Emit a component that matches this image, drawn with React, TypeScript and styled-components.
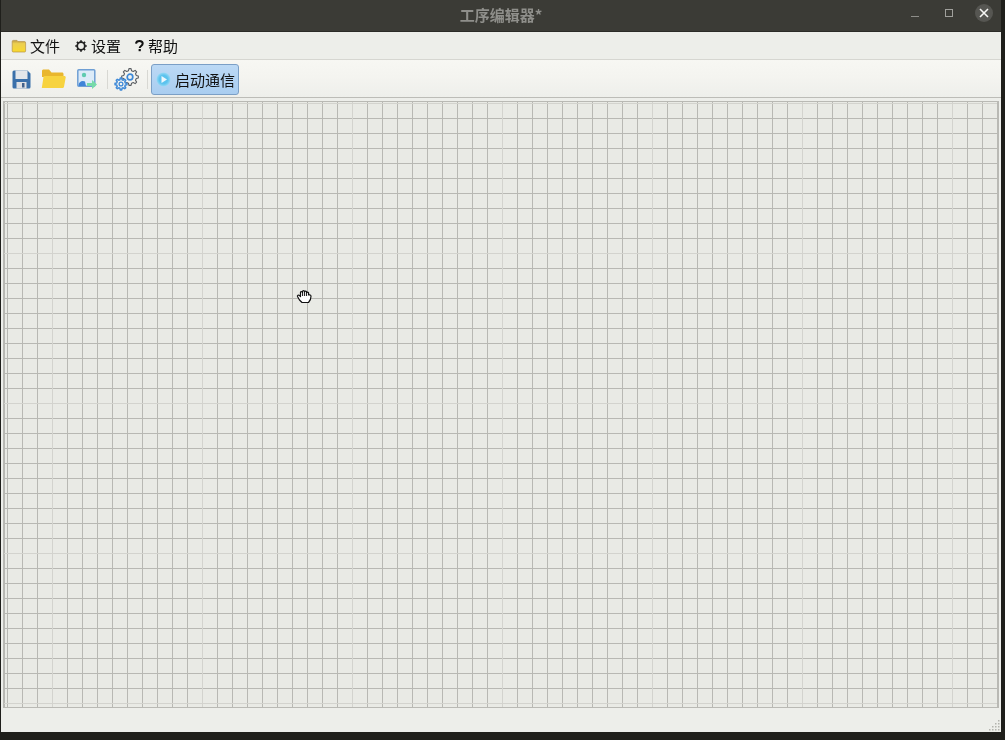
import React from "react";
import styled, { createGlobalStyle } from "styled-components";

const Global = createGlobalStyle`
  html, body { margin: 0; padding: 0; width: 1005px; height: 740px; overflow: hidden; background: #1f1f1b; }
  #root { width: 1005px; height: 740px; }
`;

const Desktop = styled.div`
  width: 1005px;
  height: 740px;
  padding: 0 4px 8px 1px;
  box-sizing: border-box;
  background: #1f1f1b;
  font-family: "Liberation Sans", "Noto Sans CJK SC", sans-serif;
`;

const Win = styled.div`
  height: 732px;
  display: flex;
  flex-direction: column;
  background: #edeeea;
  position: relative;
`;

const TitleBar = styled.div`
  height: 32px;
  flex: none;
  background: #3b3b36;
  border-bottom: 1px solid #2b2b27;
  box-sizing: border-box;
  position: relative;
  display: flex;
  align-items: center;
  justify-content: center;
  padding-bottom: 3px;
`;

const Title = styled.div`
  font-size: 15px;
  font-weight: 700;
  color: #8f8f8b;
  font-family: "Noto Sans CJK SC", sans-serif;
  filter: blur(0.3px);
`;

const WinButtons = styled.div`
  position: absolute;
  right: 8px;
  top: 4px;
  display: flex;
  align-items: center;
  gap: 10px;
`;

const WinBtn = styled.div<{ $close?: boolean }>`
  width: 24px;
  height: 18px;
  display: flex;
  align-items: center;
  justify-content: center;
  ${(p) => p.$close && "width: 18px; height: 18px; border-radius: 50%; background: #565652; margin-left: 4px;"}
`;

const MenuBar = styled.div`
  height: 28px;
  flex: none;
  display: flex;
  align-items: center;
  padding-left: 10px;
  gap: 14px;
  background: #edeeea;
  border-bottom: 1px solid #d6d6d1;
  box-sizing: border-box;
`;

const MenuItem = styled.div`
  display: flex;
  align-items: center;
  gap: 3px;
  font-size: 15px;
  color: #111;
  font-family: "Noto Sans CJK SC", sans-serif;
  filter: blur(0.3px);
`;

const ToolBar = styled.div`
  height: 38px;
  flex: none;
  display: flex;
  align-items: center;
  padding: 1px 0 0 4px;
  box-sizing: border-box;
  background: linear-gradient(#f7f7f3, #f4f4f0 45%, #eeefeb);
  border-bottom: 1px solid #bcbcb7;
`;

const ToolIcon = styled.div<{ $w?: number }>`
  width: ${(p) => p.$w ?? 32}px;
  height: 28px;
  display: flex;
  align-items: center;
  justify-content: center;
  filter: blur(0.3px);
`;

const Sep = styled.div<{ $l: number; $r: number }>`
  width: 1px;
  height: 19px;
  background: #d8d8d3;
  margin: 0 ${(p) => p.$r}px 0 ${(p) => p.$l}px;
`;

const ActiveButton = styled.div`
  height: 31px;
  width: 88px;
  box-sizing: border-box;
  border: 1px solid #7b9fc6;
  border-radius: 3px;
  background: linear-gradient(#bcd9f5, #a9cdf0);
  display: flex;
  align-items: center;
  gap: 4px;
  padding-left: 4px;
  font-size: 15px;
  color: #111;
  font-family: "Noto Sans CJK SC", sans-serif;
`;

const ButtonLabel = styled.span`
  filter: blur(0.3px);
  padding-top: 1px;
`;

const Canvas = styled.div`
  height: 607px;
  flex: none;
  margin: 3px 2px 0 2px;
  box-sizing: border-box;
  border: 1px solid #b9b9b4;
  border-right-width: 2px;
  background-color: #e9eae5;
  background-image:
    repeating-linear-gradient(to right, #d3d3ce 0 1px, transparent 1px 150px),
    repeating-linear-gradient(to bottom, #d3d3ce 0 1px, transparent 1px 150px),
    repeating-linear-gradient(to right, #b8b8b3 0 1px, transparent 1px 15px),
    repeating-linear-gradient(to bottom, #b8b8b3 0 1px, transparent 1px 15px);
  background-position: 48px 0, 0 1px, 3px 0, 0 1px;
  position: relative;
`;

const Status = styled.div`
  flex: 1;
  position: relative;
`;

const Grip = styled.svg`
  position: absolute;
  right: 1px;
  bottom: 1px;
`;

const Cursor = styled.svg`
  position: absolute;
  left: 292px;
  top: 187px;
`;

const gearPath = (cx: number, cy: number, ro: number, ri: number, teeth: number) => {
  const step = (Math.PI * 2) / teeth;
  const pts: string[] = [];
  for (let i = 0; i < teeth; i++) {
    const a = i * step;
    const at = (r: number, f: number) => {
      const t = a + f * step;
      return `${(cx + r * Math.cos(t)).toFixed(2)} ${(cy + r * Math.sin(t)).toFixed(2)}`;
    };
    pts.push(at(ri, -0.32), at(ro, -0.16), at(ro, 0.16), at(ri, 0.32));
  }
  return `M${pts.join("L")}Z`;
};

const Hand = () => (
  <Cursor width="18" height="16" viewBox="0 0 18 16">
    <path d="M3.5 11 L1.5 7.5 C1 6.5 2.5 5.5 3.5 6.5 L4.5 7.5 L4.5 3.5 C4.5 2.3 6.5 2.3 6.5 3.5 L6.5 2.5 C6.5 1.2 8.5 1.2 8.5 2.5 L8.5 3 C8.5 1.8 10.6 1.8 10.6 3 L10.6 3.8 C10.6 2.8 12.6 2.8 12.6 4 L12.6 6 C13.8 5.5 15 6 15 7.2 C15 10 14 12 12.5 13.5 L6 13.5 Z" fill="#fff" stroke="#111" strokeWidth="1.2" strokeLinejoin="round" />
    <path d="M6.6 3.5 V7 M8.6 3 V7 M10.6 3.5 V7" stroke="#111" strokeWidth="1" fill="none" />
  </Cursor>
);

export default function App() {
  return (
    <Desktop>
      <Global />
      <Win>
        <TitleBar>
          <Title>工序编辑器*</Title>
          <WinButtons>
            <WinBtn>
              <svg width="10" height="10" viewBox="0 0 10 10"><path d="M1 8.5h8" stroke="#8d8d89" strokeWidth="1" /></svg>
            </WinBtn>
            <WinBtn>
              <svg width="10" height="10" viewBox="0 0 10 10"><rect x="1.5" y="1.5" width="7" height="7" fill="none" stroke="#a0a09c" strokeWidth="1" /></svg>
            </WinBtn>
            <WinBtn $close>
              <svg width="10" height="10" viewBox="0 0 10 10"><path d="M1 1l8 8M9 1l-8 8" stroke="#f6f6f4" strokeWidth="1.6" /></svg>
            </WinBtn>
          </WinButtons>
        </TitleBar>
        <MenuBar>
          <MenuItem>
            <svg width="16" height="14" viewBox="0 0 16 14">
              <defs>
                <linearGradient id="mf" x1="0" y1="0" x2="0" y2="1">
                  <stop offset="0" stopColor="#bf9a44" />
                  <stop offset="0.28" stopColor="#eccf50" />
                  <stop offset="1" stopColor="#f9d92e" />
                </linearGradient>
              </defs>
              <path d="M1.2 2.6 C1.2 1.8 1.6 1.4 2.4 1.4 H6 L7 2.6 H13.4 C14.2 2.6 14.6 3 14.6 3.8 V12 C14.6 12.6 14.2 13 13.6 13 H2.2 C1.6 13 1.2 12.6 1.2 12 Z" fill="url(#mf)" stroke="#b49246" strokeWidth="0.7" />
            </svg>
            文件
          </MenuItem>
          <MenuItem>
            <svg width="14" height="14" viewBox="0 0 14 14">
              <circle cx="7" cy="7" r="3.8" fill="none" stroke="#222" strokeWidth="1.8" />
              <path d="M7 1.2v2M7 10.8v2M1.2 7h2M10.8 7h2M2.9 2.9l1.4 1.4M9.7 9.7l1.4 1.4M11.1 2.9L9.7 4.3M4.3 9.7l-1.4 1.4" stroke="#222" strokeWidth="1.7" />
            </svg>
            设置
          </MenuItem>
          <MenuItem>
            <svg width="10" height="14" viewBox="1 0 10 14">
              <path d="M2 4.6C2.2 2.8 3.6 2 5.4 2c1.9 0 3.3 1 3.3 2.6 0 2.3-3 2.4-3 4.4" fill="none" stroke="#111" strokeWidth="2" />
              <rect x="4.6" y="10" width="2.2" height="2.2" fill="#111" />
            </svg>
            帮助
          </MenuItem>
        </MenuBar>
        <ToolBar>
          <ToolIcon>
            <svg width="19" height="19" viewBox="0 0 19 19">
              <path d="M2 .5h13.5L18.5 3.5V17a1.5 1.5 0 0 1-1.5 1.5H2A1.5 1.5 0 0 1 .5 17V2A1.5 1.5 0 0 1 2 .5z" fill="#3a70aa" />
              <rect x="3.5" y=".5" width="12" height="8.5" fill="#e3e6ea" />
              <rect x="4.5" y="12" width="10" height="6.5" fill="#dfe1e4" />
              <rect x="10" y="13" width="2.5" height="4.5" fill="#41618a" />
            </svg>
          </ToolIcon>
          <ToolIcon>
            <svg width="25" height="20" viewBox="0 0 25 20">
              <path d="M1 2C1 1 1.7.5 2.5.5H8L10.5 3.5H21c1 0 1.5.6 1.5 1.5V8H1z" fill="#e9b62d" />
              <path d="M.8 19 2.4 8.4C2.6 7.5 3.2 7 4 7h19.2c1 0 1.7.7 1.5 1.6L23 17.7c-.2.8-.8 1.3-1.6 1.3z" fill="#f7d33f" />
            </svg>
          </ToolIcon>
          <ToolIcon $w={36}>
            <svg width="20" height="20" viewBox="0 0 20 20">
              <rect x=".8" y=".8" width="17" height="16.5" rx="1" fill="#dcebf8" stroke="#6f9fd4" strokeWidth="1.5" />
              <circle cx="7" cy="6" r="2.2" fill="#5fcbb0" />
              <path d="M1.5 16.5 C1.5 12.5 5.5 11 8 12.5 L9 17 H2z" fill="#3f84d8" />
              <path d="M10 14h5V11l5 4.5-5 4.5V17h-5z" fill="#76dba9" />
            </svg>
          </ToolIcon>
          <Sep $l={2} $r={1} />
          <ToolIcon $w={34}>
            <svg width="25" height="23" viewBox="0 0 25 23">
              <path d={gearPath(16, 9, 8.4, 6.4, 8)} fill="#f4f4f0" stroke="#5a5e63" strokeWidth="1.1" strokeLinejoin="round" />
              <circle cx="16" cy="9" r="2.8" fill="none" stroke="#3f8ad8" strokeWidth="1.7" />
              <path d={gearPath(7, 16, 6, 4.4, 8)} fill="#f4f4f0" stroke="#3f8ad8" strokeWidth="1.5" strokeLinejoin="round" />
              <circle cx="7" cy="16" r="1.9" fill="none" stroke="#3f8ad8" strokeWidth="1.3" />
            </svg>
          </ToolIcon>
          <Sep $l={4} $r={3} />
          <ActiveButton>
            <svg width="15" height="15" viewBox="0 0 15 15">
              <defs>
                <radialGradient id="pg" cx="50%" cy="50%" r="55%">
                  <stop offset="0.55" stopColor="#5cc3ee" />
                  <stop offset="1" stopColor="#a8dff7" />
                </radialGradient>
              </defs>
              <circle cx="7.5" cy="7.5" r="7" fill="url(#pg)" />
              <path d="M5.5 4l5.5 3.5L5.5 11z" fill="#eef8fd" />
            </svg>
            <ButtonLabel>启动通信</ButtonLabel>
          </ActiveButton>
        </ToolBar>
        <Canvas>
          <Hand />
        </Canvas>
        <Status>
          <Grip width="12" height="12" viewBox="0 0 12 12">
            <g fill="#b3b3ad">
              <rect x="10" y="1" width="1.5" height="1.5" />
              <rect x="7" y="4" width="1.5" height="1.5" /><rect x="10" y="4" width="1.5" height="1.5" />
              <rect x="4" y="7" width="1.5" height="1.5" /><rect x="7" y="7" width="1.5" height="1.5" /><rect x="10" y="7" width="1.5" height="1.5" />
              <rect x="1" y="10" width="1.5" height="1.5" /><rect x="4" y="10" width="1.5" height="1.5" /><rect x="7" y="10" width="1.5" height="1.5" /><rect x="10" y="10" width="1.5" height="1.5" />
            </g>
          </Grip>
        </Status>
      </Win>
    </Desktop>
  );
}
